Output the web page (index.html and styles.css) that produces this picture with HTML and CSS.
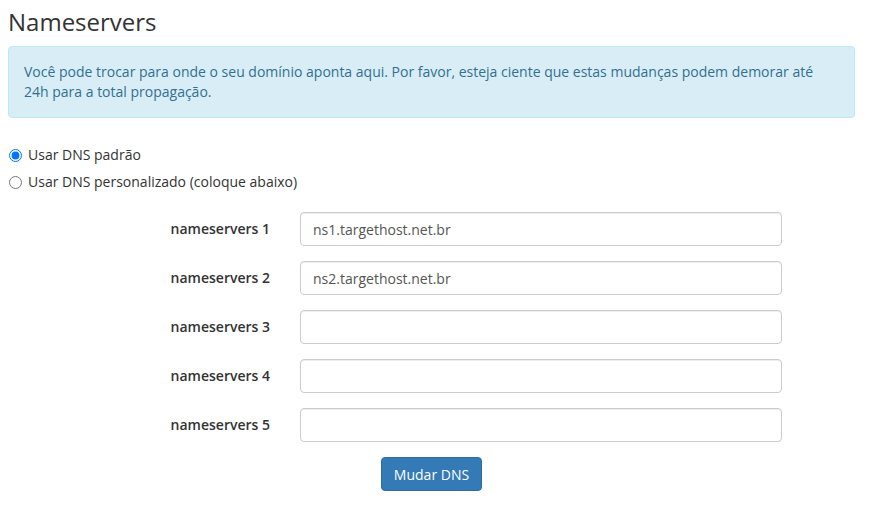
FILE: index.html
```html
<!DOCTYPE html>
<html lang="pt-BR">
<head>
    <meta charset="UTF-8">
    <title>Nameservers</title>
    <link rel="stylesheet" href="styles.css">
</head>
<body>
    <h2 class="title">Nameservers</h2>

    <div class="alert">
        Você pode trocar para onde o seu domínio aponta aqui. Por favor, esteja ciente que estas mudanças podem demorar até 24h para a total propagação.
    </div>

    <form class="ns-form">
        <div class="radios">
            <label class="radio"><input type="radio" name="dns" checked> Usar DNS padrão</label>
            <label class="radio"><input type="radio" name="dns"> Usar DNS personalizado (coloque abaixo)</label>
        </div>

        <div class="fields">
            <div class="field">
                <label for="ns1">nameservers 1</label>
                <input type="text" id="ns1" value="ns1.targethost.net.br">
            </div>
            <div class="field">
                <label for="ns2">nameservers 2</label>
                <input type="text" id="ns2" value="ns2.targethost.net.br">
            </div>
            <div class="field">
                <label for="ns3">nameservers 3</label>
                <input type="text" id="ns3">
            </div>
            <div class="field">
                <label for="ns4">nameservers 4</label>
                <input type="text" id="ns4">
            </div>
            <div class="field">
                <label for="ns5">nameservers 5</label>
                <input type="text" id="ns5">
            </div>
        </div>

        <div class="actions">
            <button type="button">Mudar DNS</button>
        </div>
    </form>
</body>
</html>
```

FILE: styles.css
```css
body {
    font-family: "Open Sans", Arial, sans-serif;
    font-size: 14px;
    line-height: 20px;
    color: #333;
    margin: 0;
    padding: 0 14px 0 8px;
    background-color: #fff;
}
.title {
    font-size: 24px;
    font-weight: 400;
    line-height: 28px;
    margin: 8px 0 10px;
    color: #333;
}
/* Info alert */
.alert {
    padding: 15px;
    background-color: #d9edf7;
    border: 1px solid #bce8f1;
    border-radius: 4px;
    color: #31708f;
}
.radios {
    margin-top: 27px;
    display: flex;
    flex-direction: column;
    gap: 7px;
}
.radio {
    display: flex;
    align-items: center;
}
.radio input {
    margin: 0 6px 0 1px;
    width: 13px;
    height: 13px;
}
/* Nameserver rows */
.fields {
    margin-top: 20px;
    display: flex;
    flex-direction: column;
    gap: 15px;
}
.field {
    display: grid;
    grid-template-columns: 262px 482px;
    column-gap: 30px;
    align-items: center;
}
.field label {
    text-align: right;
    font-weight: 600;
}
.field input {
    height: 34px;
    box-sizing: border-box;
    padding: 6px 12px;
    font-family: inherit;
    font-size: 14px;
    color: #555;
    border: 1px solid #ccc;
    border-radius: 4px;
    box-shadow: inset 0 1px 1px rgba(0, 0, 0, 0.075);
}
.actions {
    margin-top: 15px;
    text-align: center;
}
button {
    height: 34px;
    padding: 6px 12px;
    font-family: inherit;
    font-size: 14px;
    color: #fff;
    background-color: #337ab7;
    border: 1px solid #2e6da4;
    border-radius: 4px;
    cursor: pointer;
}
```
